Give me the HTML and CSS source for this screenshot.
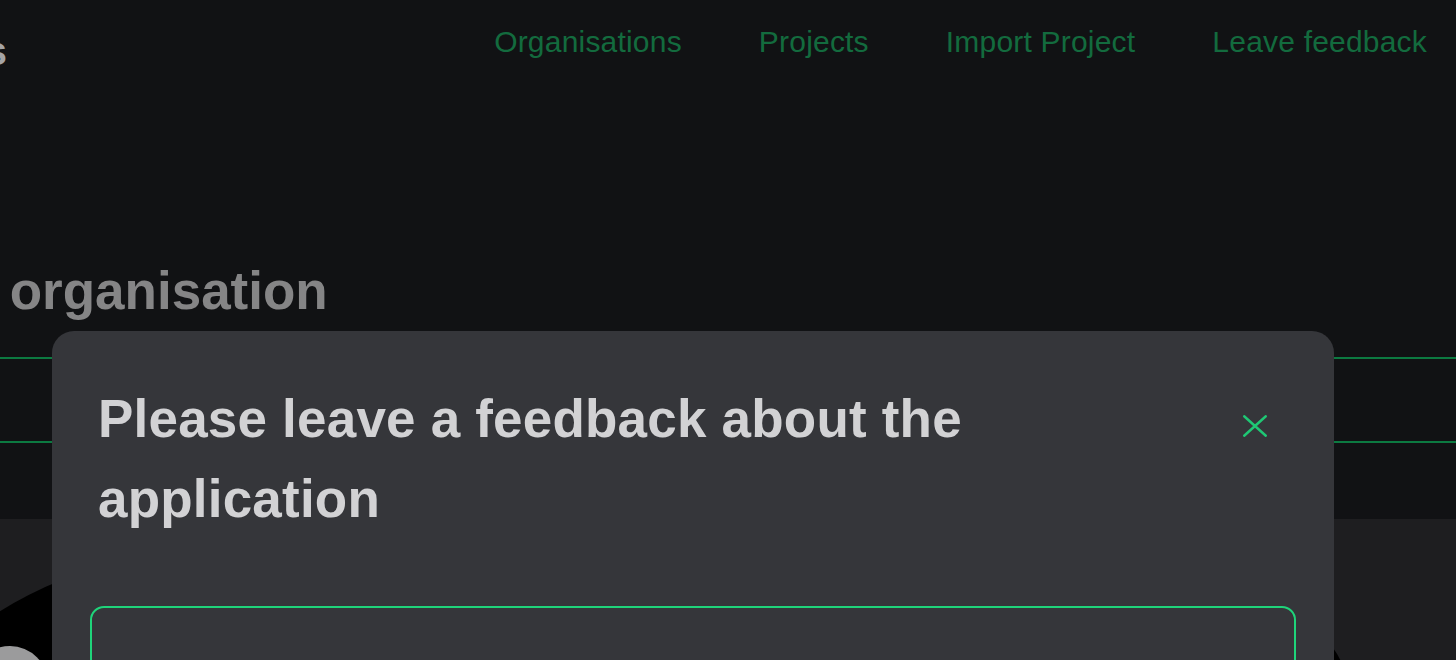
FILE: index.html
```html
<!DOCTYPE html>
<html lang="en">

<head>
    <meta charset="utf-8">
    <title>Create organisation</title>
    <link rel="stylesheet" href="styles.css">
</head>

<body>
    <div class="page">
        <header class="topbar">
            <div class="brand">Feedbacks</div>
            <nav class="menu">
                <a href="#">Organisations</a>
                <a href="#">Projects</a>
                <a href="#">Import Project</a>
                <a href="#">Leave feedback</a>
            </nav>
        </header>

        <h1 class="page-title">Create organisation</h1>

        <div class="tabs"></div>
        <div class="toolbar"></div>

        <section class="panel">
            <div class="blob"></div>
            <div class="avatar"></div>
        </section>
    </div>

    <div class="modal">
        <div class="modal-head">
            <h2 class="modal-title">Please leave a feedback about the application</h2>
            <button class="close" aria-label="Close">
                <svg viewBox="0 0 24 24" width="26" height="26">
                    <path d="M2 3 L22 21 M22 3 L2 21" />
                </svg>
            </button>
        </div>
        <textarea class="feedback"></textarea>
    </div>
</body>

</html>
```

FILE: styles.css
```css
html, body {
    margin: 0;
    padding: 0;
    height: 100%;
}

body {
    background-color: #111214;
    font-family: "Liberation Sans", Arial, Helvetica, sans-serif;
    overflow: hidden;
}

.page {
    display: flex;
    flex-direction: column;
    height: 100%;
}

.topbar {
    display: flex;
    justify-content: space-between;
    align-items: flex-start;
    height: 75px;
}

.brand {
    width: 300px;
    margin-left: -293px;
    margin-top: 29px;
    text-align: right;
    font-size: 40px;
    font-weight: 700;
    color: #a4a4a6;
}

.menu {
    display: flex;
    gap: 77px;
    padding-top: 25px;
    padding-right: 29px;
}

.menu a {
    font-size: 30px;
    letter-spacing: 0.2px;
    color: #136b3e;
    text-decoration: none;
}

.page-title {
    margin: 185px 0 0 -170px;
    font-size: 53px;
    font-weight: 700;
    line-height: 61px;
    color: #858586;
}

.tabs {
    margin-top: 36px;
    height: 82px;
    border-top: 2px solid #0c7a41;
    border-bottom: 2px solid #0c7a41;
}

.toolbar {
    height: 76px;
}

.panel {
    flex: 1;
    position: relative;
    overflow: hidden;
    background-color: #1e1e20;
}

.blob {
    width: 1400px;
    height: 378px;
    margin: -24px 0 0 -54px;
    border-radius: 50%;
    background-color: #000;
}

.avatar {
    position: absolute;
    left: -28px;
    top: 127px;
    width: 76px;
    height: 76px;
    border-radius: 50%;
    background-color: #9b9b9c;
}

.modal {
    position: fixed;
    top: 331px;
    left: 52px;
    width: 1282px;
    bottom: -60px;
    box-sizing: border-box;
    padding: 48px 38px 0 38px;
    background-color: #35363a;
    border-radius: 22px;
}

.modal-head {
    display: flex;
    justify-content: space-between;
    align-items: flex-start;
}

.modal-title {
    margin: 0 0 0 8px;
    max-width: 1100px;
    font-size: 53px;
    font-weight: 700;
    line-height: 80px;
    letter-spacing: 0.2px;
    color: #d2d2d4;
}

.close {
    width: 48px;
    height: 48px;
    margin: 23px 17px 0 0;
    padding: 0;
    display: flex;
    align-items: center;
    justify-content: center;
    background: none;
    border: 0;
    cursor: pointer;
}

.close svg {
    fill: none;
    stroke: #1fc774;
    stroke-width: 2.2;
    stroke-linecap: round;
}

.feedback {
    display: block;
    width: 100%;
    height: 220px;
    margin-top: 67px;
    box-sizing: border-box;
    background: transparent;
    border: 2px solid #1fd47a;
    border-radius: 14px;
    resize: none;
    outline: none;
}
```
